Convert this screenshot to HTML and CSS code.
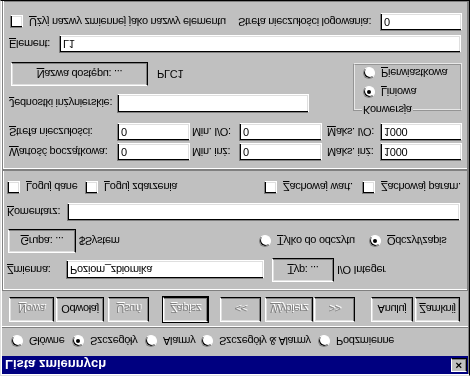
FILE: index.html
```html
<!DOCTYPE html>
<html lang="pl">
<head>
    <meta charset="UTF-8">
    <title>Lista zmiennych</title>
    <link rel="stylesheet" href="styles.css">
</head>
<body>
<div class="window">
    <div class="titlebar">
        <span class="title">Lista zmiennych</span>
        <span class="close">✕</span>
    </div>

    <div class="tabs">
        <label class="radio tab-main"><span class="dot"></span>Główne</label>
        <label class="radio tab-details"><span class="dot on"></span>Szczegóły</label>
        <label class="radio tab-alarms"><span class="dot"></span>Alarmy</label>
        <label class="radio tab-both"><span class="dot"></span>Szczegóły &amp; Alarmy</label>
        <label class="radio"><span class="dot"></span>Podzmienne</label>
    </div>

    <div class="sep"></div>

    <div class="actions">
        <span class="btn off b-new"><u>N</u>owa</span>
        <span class="btn b-undo">Odwołaj</span>
        <span class="btn off b-del"><u>U</u>suń</span>
        <span class="btn off default b-save"><u>Z</u>apisz</span>
        <span class="btn off b-prev">&lt;&lt;</span>
        <span class="btn off b-pick"><u>W</u>ybierz</span>
        <span class="btn off b-next">&gt;&gt;</span>
        <span class="btn b-cancel">Anuluj</span>
        <span class="btn b-close"><u>Z</u>amknij</span>
    </div>

    <!-- dane ogolne zmiennej -->
    <div class="panel panel-var">
        <div class="row row-var">
            <span class="lbl w-var"><u>Z</u>mienna:</span>
            <span class="field f-var">Poziom_zbiornika</span>
            <span class="btn b-type"><u>T</u>yp: ...</span>
            <span class="type-name">I/O Integer</span>
        </div>
        <div class="row row-group">
            <span class="btn b-group"><u>G</u>rupa: ...</span>
            <span class="system">$System</span>
            <label class="radio w-ro"><span class="dot"></span><u>T</u>ylko do odczytu</label>
            <label class="radio"><span class="dot on"></span><u>O</u>dczyt/zapis</label>
        </div>
        <div class="row row-comment">
            <span class="lbl w-comment"><u>K</u>omentarz:</span>
            <span class="field f-comment"></span>
        </div>
        <div class="row row-checks">
            <label class="check w-log"><span class="box"></span><u>L</u>oguj dane</label>
            <label class="check w-events"><span class="box"></span><u>L</u>oguj zdarzenia</label>
            <label class="check w-keep"><span class="box"></span><u>Z</u>achowaj wart.</label>
            <label class="check"><span class="box"></span><u>Z</u>achowaj param.</label>
        </div>
    </div>

    <!-- szczegoly -->
    <div class="panel panel-details">
        <div class="row row-range">
            <span class="lbl w-first"><u>W</u>artość początkowa:</span>
            <span class="field f-small">0</span>
            <span class="lbl w-min">Min. inż:</span>
            <span class="field f-mid">0</span>
            <span class="lbl w-max">Maks. inż:</span>
            <span class="field f-end">1000</span>
        </div>
        <div class="row row-range second">
            <span class="lbl w-first"><u>S</u>trefa nieczułości:</span>
            <span class="field f-small">0</span>
            <span class="lbl w-min">Min. I/O:</span>
            <span class="field f-mid">0</span>
            <span class="lbl w-max"><u>M</u>aks. I/O:</span>
            <span class="field f-end">1000</span>
        </div>
        <div class="block">
            <div class="block-left">
                <div class="row row-units">
                    <span class="lbl w-first"><u>J</u>ednostki inżynierskie:</span>
                    <span class="field f-units"></span>
                </div>
                <div class="row row-access">
                    <span class="btn b-access"><u>N</u>azwa dostępu: ...</span>
                    <span class="plc">PLC1</span>
                </div>
            </div>
            <fieldset class="conv">
                <legend>Konwersja</legend>
                <label class="radio"><span class="dot on"></span><u>L</u>iniowa</label>
                <label class="radio"><span class="dot"></span><u>P</u>ierwiastkowa</label>
            </fieldset>
        </div>
        <div class="row row-element">
            <span class="lbl w-element"><u>E</u>lement:</span>
            <span class="field f-element">L1</span>
        </div>
        <div class="row row-use">
            <label class="check w-use"><span class="box"></span><u>U</u>żyj nazwy zmiennej jako nazwy elementu</label>
            <span class="lbl w-logzone">Strefa nieczułości logowania:</span>
            <span class="field f-end">0</span>
        </div>
    </div>
</div>
</body>
</html>
```

FILE: styles.css
```css
body {
    margin: 0;
    background: #c0c0c0;
}

/* obraz jest odwrocony w pionie */
.window {
    width: 470px;
    height: 376px;
    box-sizing: border-box;
    overflow: hidden;
    padding: 1px;
    background: #c0c0c0;
    border: 1px solid;
    border-color: #dfdfdf #000 #000 #dfdfdf;
    box-shadow: inset 1px 1px #fff, inset -1px -1px #808080;
    font: 11px "Liberation Sans", Arial, sans-serif;
    letter-spacing: -0.3px;
    color: #000;
    transform: scaleY(-1);
}

.titlebar {
    height: 18px;
    display: flex;
    align-items: center;
    justify-content: space-between;
    padding: 0 1px 0 3px;
    background: #000080;
    color: #fff;
    font-size: 13px;
    font-weight: bold;
    letter-spacing: 0;
}

.close {
    width: 16px;
    height: 14px;
    box-sizing: border-box;
    display: flex;
    align-items: center;
    justify-content: center;
    background: #c0c0c0;
    color: #000;
    font-size: 9px;
    border: 1px solid;
    border-color: #fff #000 #000 #fff;
    box-shadow: inset -1px -1px #808080;
}

.row {
    display: flex;
    align-items: center;
}

.lbl {
    white-space: nowrap;
}

/* radio i checkbox */
.radio, .check {
    display: flex;
    align-items: center;
    white-space: nowrap;
}

.dot {
    width: 12px;
    height: 12px;
    box-sizing: border-box;
    margin-right: 6px;
    border-radius: 50%;
    background: #fff;
    border: 1px solid;
    border-color: #808080 #fff #fff #808080;
    box-shadow: inset 1px 1px #000;
    display: flex;
    align-items: center;
    justify-content: center;
}

.dot.on::after {
    content: "";
    width: 4px;
    height: 4px;
    border-radius: 50%;
    background: #000;
}

.box {
    width: 13px;
    height: 13px;
    box-sizing: border-box;
    margin-right: 6px;
    background: #fff;
    border: 1px solid;
    border-color: #808080 #fff #fff #808080;
    box-shadow: inset 1px 1px #000, inset -1px -1px #dfdfdf;
}

.field {
    height: 18px;
    box-sizing: border-box;
    display: flex;
    align-items: center;
    padding-left: 3px;
    background: #fff;
    border: 1px solid;
    border-color: #808080 #fff #fff #808080;
    box-shadow: inset 1px 1px #000, inset -1px -1px #dfdfdf;
}

.btn {
    height: 25px;
    box-sizing: border-box;
    display: flex;
    align-items: center;
    justify-content: center;
    border: 1px solid;
    border-color: #fff #000 #000 #fff;
    box-shadow: inset -1px -1px #808080, inset 1px 1px #dfdfdf;
    white-space: nowrap;
}

.btn.off {
    color: #808080;
    text-shadow: 1px 1px #fff;
}

.btn.default {
    outline: 1px solid #000;
}

.sep {
    margin-top: 5px;
    border-top: 1px solid #808080;
    border-bottom: 1px solid #fff;
}

.tabs {
    height: 16px;
    margin-top: 7px;
    padding-left: 9px;
    display: flex;
    align-items: center;
}

.tab-main { width: 61px; }
.tab-details { width: 73px; }
.tab-alarms { width: 56px; }
.tab-both { width: 117px; }

.actions {
    display: flex;
    margin-top: 4px;
    padding-left: 7px;
}

.b-new { width: 45px; }
.b-undo { width: 48px; margin-left: 2px; }
.b-del { width: 41px; margin-left: 4px; }
.b-save { width: 45px; margin-left: 14px; }
.b-prev { width: 41px; margin-left: 12px; }
.b-pick { width: 48px; margin-left: 4px; }
.b-next { width: 41px; margin-left: 1px; }
.b-cancel { width: 42px; margin-left: 16px; }
.b-close { width: 45px; margin-left: 2px; }

.panel {
    box-sizing: border-box;
    border: 1px solid #808080;
    box-shadow: inset 1px 1px #fff;
}

.panel-var {
    height: 121px;
    margin-top: 6px;
    padding: 8px 4px 0 4px;
}

.row-var { height: 24px; }
.w-var { width: 59px; }
.f-var { width: 198px; height: 19px; }
.b-type { width: 62px; height: 24px; margin-left: 8px; }
.type-name { margin-left: 3px; }

.row-group { height: 24px; margin-top: 5px; }
.b-group { width: 68px; height: 24px; margin-left: 1px; }
.system { width: 180px; margin-left: 3px; }
.w-ro { width: 110px; }

.row-comment { margin-top: 8px; }
.w-comment { width: 60px; }
.f-comment { width: 393px; }

.row-checks { margin-top: 9px; }
.w-log { width: 78px; }
.w-events { width: 179px; }
.w-keep { width: 98px; }

.panel-details {
    height: 200px;
    padding: 8px 4px 0 6px;
}

.w-first { width: 108px; }
.f-small { width: 73px; }
.w-min { width: 47px; margin-left: 2px; }
.f-mid { width: 83px; }
.w-max { width: 53px; margin-left: 5px; }
.f-end { width: 82px; }

.row-range.second { margin-top: 2px; }

.block {
    display: flex;
    margin-top: 7px;
}

.block-left { width: 344px; }

.row-units { margin-top: 3px; }
.f-units { width: 192px; height: 19px; }

.row-access { margin-top: 8px; }
.b-access { width: 137px; height: 24px; margin-left: 2px; }
.plc { margin-left: 9px; }

.conv {
    width: 109px;
    height: 53px;
    box-sizing: border-box;
    margin: 0;
    padding: 6px 0 0 8px;
    border: 2px groove #e8e8e8;
    display: flex;
    flex-direction: column;
    gap: 7px;
}

.conv legend {
    padding: 0 1px;
    margin-left: -1px;
}

.row-element { margin-top: 9px; }
.w-element { width: 50px; }
.f-element { width: 402px; }

.row-use { margin-top: 4px; }
.w-use { width: 228px; margin-left: 1px; }
.w-logzone { width: 142px; }
```
